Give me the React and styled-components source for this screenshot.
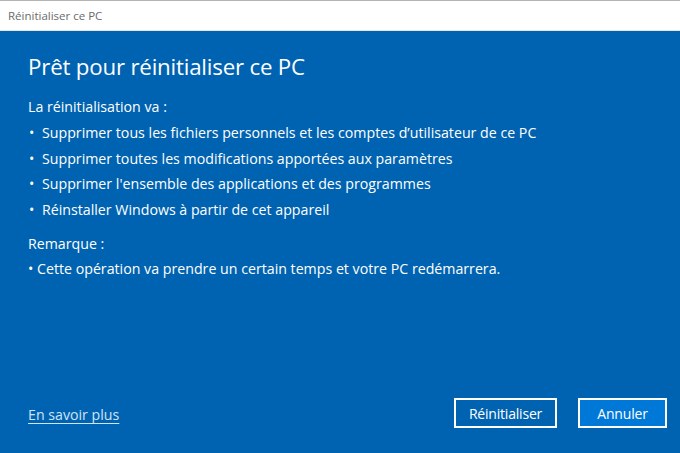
import styled, { createGlobalStyle } from "styled-components";

const GlobalStyle = createGlobalStyle`
  html, body {
    margin: 0;
    padding: 0;
    background: #0063b1;
  }
  body {
    font-family: "Open Sans", "Noto Sans", sans-serif;
  }
`;

const steps = [
  "Supprimer tous les fichiers personnels et les comptes d\u2019utilisateur de ce PC",
  "Supprimer toutes les modifications apportées aux paramètres",
  "Supprimer l'ensemble des applications et des programmes",
  "Réinstaller Windows à partir de cet appareil",
];

export default function App() {
  return (
    <>
      <GlobalStyle />
      <Window>
        <TitleBar>Réinitialiser ce PC</TitleBar>
        <Panel>
          <Heading>Prêt pour réinitialiser ce PC</Heading>
          <Label>La réinitialisation va :</Label>
          <List>
            {steps.map((s) => (
              <Item key={s}>
                <Dot>•</Dot>
                {s}
              </Item>
            ))}
          </List>
          <Label $top={12}>Remarque :</Label>
          <Note>• Cette opération va prendre un certain temps et votre PC redémarrera.</Note>
          <Footer>
            <Link href="#">En savoir plus</Link>
            <Buttons>
              <Button>Réinitialiser</Button>
              <Button $primary>Annuler</Button>
            </Buttons>
          </Footer>
        </Panel>
      </Window>
    </>
  );
}

const Window = styled.div`
  width: 680px;
  height: 453px;
  display: flex;
  flex-direction: column;
  overflow: hidden;
`;

const TitleBar = styled.div`
  height: 31px;
  box-sizing: border-box;
  border-top: 1px solid #b4b4b4;
  background: #ffffff;
  color: #6b6b6b;
  font-size: 11.5px;
  padding: 7px 0 0 8px;
  border-bottom: 1px solid #e6e6e6;
`;

const Panel = styled.div`
  flex: 1;
  background: #0063b1;
  color: #ffffff;
  padding: 21px 28px 0 28px;
  display: flex;
  flex-direction: column;
`;

const Heading = styled.h1`
  margin: 0 0 14px 0;
  font-weight: 400;
  font-size: 22.3px;
  line-height: 30px;
  letter-spacing: -0.2px;
`;

const Label = styled.div`
  font-size: 14.2px;
  line-height: 22px;
  margin-top: ${(p) => p.$top || 0}px;
`;

const List = styled.ul`
  list-style: none;
  margin: 4px 0 0 0;
  padding: 0;
  display: flex;
  flex-direction: column;
  gap: 3.7px;
`;

const Item = styled.li`
  font-size: 14.2px;
  line-height: 22px;
  display: flex;
`;

const Dot = styled.span`
  width: 14px;
  flex: none;
  padding-left: 1px;
  box-sizing: border-box;
`;

const Note = styled.div`
  font-size: 14.2px;
  line-height: 22px;
  margin-top: 3px;
`;

const Footer = styled.div`
  margin-top: auto;
  height: 55px;
  display: flex;
  align-items: flex-start;
  justify-content: space-between;
  margin-right: -15px;
`;

const Link = styled.a`
  color: #cfe4f7;
  font-size: 14.2px;
  margin-top: 7px;
  text-decoration: underline;
  text-underline-offset: 3px;
`;

const Buttons = styled.div`
  display: flex;
  gap: 21px;
`;

const Button = styled.button`
  font-family: inherit;
  font-size: 14px;
  letter-spacing: -0.2px;
  color: #ffffff;
  background: ${(p) => (p.$primary ? "#0078d7" : "#0063b1")};
  border: 2px solid #ffffff;
  height: 30px;
  min-width: ${(p) => (p.$primary ? "89px" : "103px")};
  padding: 0 10px;
  cursor: pointer;
`;
